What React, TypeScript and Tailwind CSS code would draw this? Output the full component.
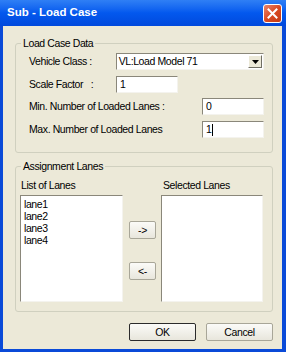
import React from 'react';

const lanes = ['lane1', 'lane2', 'lane3', 'lane4'];

const sunken =
    'bg-white border-t-[#8a877a] border-l-[#8a877a] border-b-[#f4f3ee] border-r-[#f4f3ee] border';

function GroupBox({ title, className, children }: { title: string; className: string; children: React.ReactNode }) {
    return (
        <div className={`relative border border-[#d0d0bf] rounded-[3px] ${className}`}>
            <span className="absolute -top-[8px] left-[5px] px-[2px] bg-[#ece9d8] leading-[14px]">{title}</span>
            {children}
        </div>
    );
}

function TextBox({ value, caret = false, className }: { value: string; caret?: boolean; className: string }) {
    return (
        <div className={`${sunken} flex items-center pl-[3px] ${className}`}>
            <span>{value}</span>
            {caret && <span className="w-px h-[12px] bg-black ml-px" />}
        </div>
    );
}

function Button({ label, isDefault = false, className }: { label: string; isDefault?: boolean; className: string }) {
    return (
        <div
            className={`flex items-center justify-center bg-gradient-to-b from-[#fbfbf8] to-[#e8e6dc] rounded-[2px] ${
                isDefault ? 'border border-[#2b2b2b]' : 'border border-[#a8a698]'
            } ${className}`}
        >
            <span className="pt-px">{label}</span>
        </div>
    );
}

export default function App() {
    return (
        <div className="w-[286px] h-[352px] flex flex-col bg-[#0a4ad8] font-['Liberation_Sans',Arial,sans-serif] text-[10.5px] tracking-[-0.4px] text-black">
            <div className="h-[26px] shrink-0 flex items-center justify-between pl-[7px] pr-[4px] bg-gradient-to-b from-[#2f7ff5] via-[#0358ee] to-[#0149dc]">
                <span className="text-white font-bold text-[11.5px] tracking-[0px]">Sub - Load Case</span>
                <div className="w-[19px] h-[19px] rounded-[3px] border border-white bg-gradient-to-br from-[#e9836a] via-[#da4a22] to-[#c33a15] flex items-center justify-center">
                    <svg width="11" height="11" viewBox="0 0 11 11" aria-hidden="true">
                        <path d="M1.5 1.5 L9.5 9.5 M9.5 1.5 L1.5 9.5" stroke="white" strokeWidth="2" strokeLinecap="square" />
                    </svg>
                </div>
            </div>

            <div className="flex-1 ml-[3px] mr-[4px] mb-[3px] bg-[#ece9d8] pl-[12px] pr-[9px] pt-[17px] flex flex-col">
                <GroupBox title="Load Case Data" className="h-[110px] pt-[9px] pl-[13px] pr-[8px]">
                    <div className="flex items-center h-[17px]">
                        <span className="w-[87px]">Vehicle Class :</span>
                        <div className={`${sunken} flex items-center w-[149px] h-[17px] pl-[2px]`}>
                            <span className="flex-1">VL:Load Model 71</span>
                            <div className="w-[14px] h-[13px] mr-px bg-[#ece9d8] border border-t-white border-l-white border-b-[#716f64] border-r-[#716f64] flex items-center justify-center">
                                <svg width="7" height="4" viewBox="0 0 7 4" aria-hidden="true">
                                    <path d="M0 0 H7 L3.5 4 Z" fill="black" />
                                </svg>
                            </div>
                        </div>
                    </div>
                    <div className="flex items-center h-[17px] mt-[6px]">
                        <span className="w-[87px]">Scale Factor&nbsp;&nbsp;&nbsp;:</span>
                        <TextBox value="1" className="w-[62px] h-[17px]" />
                    </div>
                    <div className="flex items-center h-[17px] mt-[5px]">
                        <span className="flex-1">Min. Number of Loaded Lanes :</span>
                        <TextBox value="0" className="w-[62px] h-[17px]" />
                    </div>
                    <div className="flex items-center h-[17px] mt-[6px]">
                        <span className="flex-1">Max. Number of Loaded Lanes</span>
                        <TextBox value="1" caret className="w-[62px] h-[17px]" />
                    </div>
                </GroupBox>

                <GroupBox title="Assignment Lanes" className="mt-[13px] h-[146px] pt-[12px] pl-[4px] pr-[9px]">
                    <div className="flex">
                        <div className="flex flex-col w-[103px]">
                            <span className="pl-px leading-[13px] h-[13px]">List of Lanes</span>
                            <div className={`${sunken} mt-[3px] h-[107px] pl-[3px] pt-[2px] flex flex-col leading-[12px]`}>
                                {lanes.map(l => (
                                    <span key={l}>{l}</span>
                                ))}
                            </div>
                        </div>
                        <div className="w-[27px] ml-[6px] flex flex-col pt-[42px]">
                            <Button label="->" className="h-[18px]" />
                            <Button label="<-" className="h-[18px] mt-[23px]" />
                        </div>
                        <div className="flex flex-col w-[102px] ml-[5px]">
                            <span className="pl-[2px] leading-[13px] h-[13px]">Selected Lanes</span>
                            <div className={`${sunken} mt-[3px] h-[107px]`} />
                        </div>
                    </div>
                </GroupBox>

                <div className="flex justify-end gap-[10px] mt-[11px]">
                    <Button label="OK" isDefault className="w-[67px] h-[18px]" />
                    <Button label="Cancel" className="w-[67px] h-[18px]" />
                </div>
            </div>
        </div>
    );
}
